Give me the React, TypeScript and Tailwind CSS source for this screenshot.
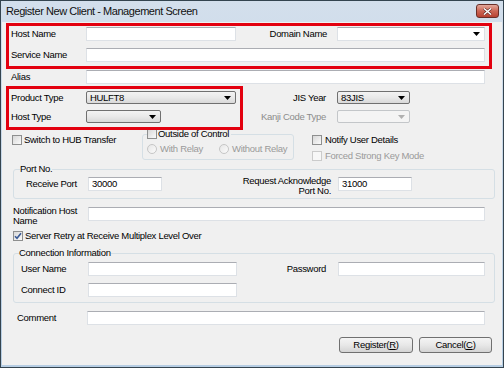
import React from "react";

const FONT = "font-['Liberation_Sans',Arial,sans-serif]";

function TextBox({ className = "", value }: { className?: string; value?: string }) {
  return (
    <div
      className={`h-[14px] bg-white border border-[#dde1e6] border-t-[#abadb3] flex items-center pl-[3px] leading-none ${className}`}
    >
      {value}
    </div>
  );
}

function Arrow({ color = "#000" }: { color?: string }) {
  return (
    <svg width="7" height="4" viewBox="0 0 7 4" className="shrink-0">
      <path d="M0 0 H7 L3.5 4 Z" fill={color} />
    </svg>
  );
}

function Combo({ className = "", value, disabled }: { className?: string; value?: string; disabled?: boolean }) {
  return (
    <div
      className={`h-[13px] rounded-[2px] border flex items-center justify-between pl-[3px] pr-[4px] leading-none ${
        disabled
          ? "border-[#c3c6c9] bg-[#f4f4f4]"
          : "border-[#707070] bg-gradient-to-b from-[#f3f3f3] via-[#e9e9e9] to-[#d9d9d9]"
      } ${className}`}
    >
      <span>{value}</span>
      <Arrow color={disabled ? "#b0b0b0" : "#000"} />
    </div>
  );
}

function Check({ checked, disabled }: { checked?: boolean; disabled?: boolean }) {
  return (
    <div
      className={`w-[10px] h-[10px] border shrink-0 flex items-center justify-center ${
        disabled ? "border-[#cbcbcb] bg-[#f7f7f7]" : "border-[#8e8f8f] bg-gradient-to-br from-[#d8d8d8] to-[#fafafa]"
      }`}
    >
      {checked && (
        <svg width="8" height="8" viewBox="0 0 8 8">
          <path d="M1 4.2 L3 6.3 L7 1.2" stroke="#3a5a96" strokeWidth="1.6" fill="none" />
        </svg>
      )}
    </div>
  );
}

function Radio() {
  return <div className="w-[10px] h-[10px] rounded-full border border-[#c6c6c6] bg-gradient-to-br from-[#e6e6e6] to-[#fbfbfb] shrink-0" />;
}

function Button({ children }: { children: React.ReactNode }) {
  return (
    <div className="h-[16px] rounded-[3px] border border-[#707070] bg-gradient-to-b from-[#f4f4f4] via-[#e8e8e8] to-[#d4d4d4] flex items-center justify-center leading-none">
      {children}
    </div>
  );
}

export default function App() {
  return (
    <div className={`w-[504px] h-[368px] border border-[#34444f] bg-gradient-to-b from-[#d3dfec] to-[#b6cde3] flex flex-col text-black whitespace-nowrap ${FONT}`}>
      {/* Title bar */}
      <div className="h-[21px] flex items-start justify-between pl-[5px] pr-[4px]">
        <div className="text-[11px] tracking-[-0.45px] leading-none mt-[5px] text-[#111]">Register New Client - Management Screen</div>
        <div className="mt-[3px] w-[23px] h-[14px] rounded-[3px] border border-[#6a2f28] bg-gradient-to-b from-[#e2a89c] via-[#cc6655] to-[#b84232] flex items-center justify-center">
          <svg width="9" height="7" viewBox="0 0 9 7">
            <path d="M1 0.5 L8 6.5 M8 0.5 L1 6.5" stroke="#5a2520" strokeWidth="2.6" />
            <path d="M1 0.5 L8 6.5 M8 0.5 L1 6.5" stroke="#ffffff" strokeWidth="1.5" />
          </svg>
        </div>
      </div>

      {/* Body */}
      <div className="relative flex-1 mx-[1px] mb-[2px] bg-[#f0f0f0] flex flex-col text-[9.5px] tracking-[-0.3px] leading-none">
        {/* Row A */}
        <div className="mt-[5px] flex items-center pl-[9px]">
          <div className="w-[75px]">Host Name</div>
          <TextBox className="w-[150px]" />
          <div className="w-[101px] text-right pr-[10px]">Domain Name</div>
          <div className="w-[148px] h-[14px] bg-white border border-[#dde1e6] border-t-[#abadb3] flex items-center justify-end pr-[4px]">
            <Arrow />
          </div>
        </div>
        {/* Row B */}
        <div className="mt-[7px] flex items-center pl-[9px]">
          <div className="w-[75px]">Service Name</div>
          <TextBox className="w-[399px]" />
        </div>
        {/* Row C */}
        <div className="mt-[8px] flex items-center pl-[9px]">
          <div className="w-[75px]">Alias</div>
          <TextBox className="w-[399px]" />
        </div>
        {/* Row D */}
        <div className="mt-[7px] flex items-center pl-[9px]">
          <div className="w-[75px]">Product Type</div>
          <Combo className="w-[150px]" value="HULFT8" />
          <div className="w-[101px] text-right pr-[11px]">JIS Year</div>
          <Combo className="w-[73px]" value="83JIS" />
        </div>
        {/* Row E */}
        <div className="mt-[6px] flex items-center pl-[9px]">
          <div className="w-[75px]">Host Type</div>
          <Combo className="w-[75px]" />
          <div className="w-[176px] text-right pr-[11px] text-[#8c8c8c]">Kanji Code Type</div>
          <Combo className="w-[73px]" disabled />
        </div>
        {/* Row F */}
        <div className="mt-[6px] flex items-start h-[32px]">
          <div className="w-[140px] pl-[10px] mt-[6px] flex items-center gap-[2px]">
            <Check />
            <span>Switch to HUB Transfer</span>
          </div>
          <fieldset className="w-[152px] h-[31px] border border-[#d5dfe5] rounded-[3px] px-[4px]">
            <legend className="flex items-center gap-[1px] h-[10px] pr-[2px]">
              <Check />
              <span>Outside of Control</span>
            </legend>
            <div className="flex items-center mt-[5px] text-[#9a9a9a]">
              <div className="flex items-center gap-[3px] w-[72px]">
                <Radio />
                <span>With Relay</span>
              </div>
              <div className="flex items-center gap-[3px]">
                <Radio />
                <span>Without Relay</span>
              </div>
            </div>
          </fieldset>
          <div className="ml-[18px] flex flex-col">
            <div className="mt-[6px] flex items-center gap-[3px]">
              <Check />
              <span>Notify User Details</span>
            </div>
            <div className="mt-[6px] flex items-center gap-[3px] text-[#9a9a9a]">
              <Check disabled />
              <span>Forced Strong Key Mode</span>
            </div>
          </div>
        </div>
        {/* Port No. group */}
        <fieldset className="mt-[2px] ml-[11px] w-[482px] border border-[#d5dfe5] rounded-[3px] px-[6px] pb-[2px]">
          <legend className="h-[12px] leading-[12px]">Port No.</legend>
          <div className="flex items-start">
            <div className="mt-[2px] h-[14px] flex items-center w-[68px] pl-[6px]">Receive Port</div>
            <TextBox className="mt-[2px] w-[74px]" value="30000" />
            <div className="mt-[1px] w-[169px] text-right leading-[10px]">
              Request Acknowledge
              <br />
              Port No.
            </div>
            <TextBox className="mt-[2px] ml-[7px] w-[74px]" value="31000" />
          </div>
        </fieldset>
        {/* Notification Host Name */}
        <div className="mt-[6px] flex items-start pl-[11px]">
          <div className="w-[75px] leading-[10px] pt-[1px]">
            Notification Host
            <br />
            Name
          </div>
          <TextBox className="mt-[2px] w-[397px]" />
        </div>
        {/* Server Retry */}
        <div className="mt-[4px] h-[12px] flex items-center gap-[2px] pl-[11px]">
          <Check checked />
          <span>Server Retry at Receive Multiplex Level Over</span>
        </div>
        {/* Connection Information */}
        <fieldset className="mt-[5px] ml-[11px] w-[482px] border border-[#d5dfe5] rounded-[3px] px-[5px] pb-[5px]">
          <legend className="h-[12px] leading-[12px]">Connection Information</legend>
          <div className="mt-[3px] flex items-center pl-[2px]">
            <div className="w-[67px]">User Name</div>
            <TextBox className="w-[149px]" />
            <div className="w-[89px] text-right">Password</div>
            <TextBox className="ml-[12px] w-[147px]" />
          </div>
          <div className="mt-[7px] flex items-center pl-[2px]">
            <div className="w-[67px]">Connect ID</div>
            <TextBox className="w-[149px]" />
          </div>
        </fieldset>
        {/* Comment */}
        <div className="mt-[8px] flex items-center pl-[15px]">
          <div className="w-[70px]">Comment</div>
          <TextBox className="w-[398px]" />
        </div>
        {/* Buttons */}
        <div className="mt-[12px] flex justify-end gap-[6px] pr-[10px]">
          <div className="w-[74px]">
            <Button>
              Register(<span className="underline">R</span>)
            </Button>
          </div>
          <div className="w-[73px]">
            <Button>
              Cancel(<span className="underline">C</span>)
            </Button>
          </div>
        </div>

        {/* Red highlight annotations */}
        <div className="absolute left-[4px] top-[1px] w-[486px] h-[46px] border-[3px] border-[#e3000f] pointer-events-none" />
        <div className="absolute left-[4px] top-[64px] w-[237px] h-[44px] border-[3px] border-[#e3000f] pointer-events-none" />
      </div>
    </div>
  );
}
